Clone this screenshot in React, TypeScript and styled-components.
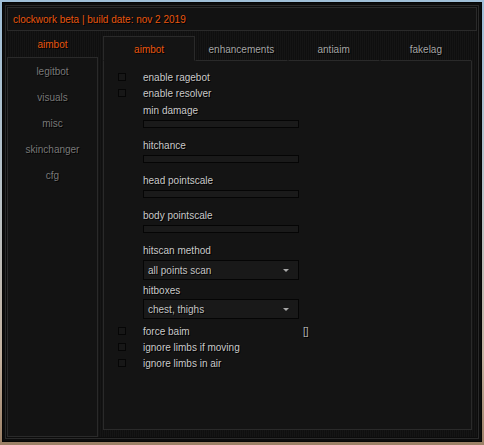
import styled, { createGlobalStyle } from "styled-components";

const GlobalStyle = createGlobalStyle`
  html, body {
    margin: 0;
    padding: 0;
    height: 100%;
    background: linear-gradient(180deg, #9fbfd8 0%, #b9c2c6 45%, #c4b2a0 80%, #9c8066 100%);
  }
  body {
    font-family: "Liberation Sans", Arial, sans-serif;
    font-size: 10px;
  }
`;

const ORANGE = "#e8560f";

const Window = styled.div`
  box-sizing: border-box;
  width: 480px;
  height: 440px;
  margin: 2px;
  padding: 2px;
  background: #0c0c0c;
  border: 1px solid #050505;
  display: flex;
`;

const Frame = styled.div`
  flex: 1;
  display: flex;
  flex-direction: column;
  border: 1px solid #2a2a2a;
  padding: 1px;
`;

const TitleBar = styled.div`
  box-sizing: border-box;
  height: 24px;
  border: 1px solid #2a2a2a;
  background: #121212;
  display: flex;
  align-items: center;
  padding: 1px 0 0 5px;
`;

const TitleText = styled.span`
  color: ${ORANGE};
  text-shadow: 1px 1px 0 #000;
`;

const Body = styled.div`
  flex: 1;
  display: flex;
  background: repeating-linear-gradient(90deg, #0f0f0f 0px, #0f0f0f 1px, #151515 1px, #151515 2px);
`;

const Sidebar = styled.div`
  width: 91px;
  display: flex;
  flex-direction: column;
`;

const SideHeader = styled.div`
  height: 26px;
  display: flex;
  align-items: center;
  justify-content: center;
  color: ${ORANGE};
  text-shadow: 1px 1px 0 #000;
`;

const SideBox = styled.div`
  flex: 1;
  border: 1px solid #2a2a2a;
  background: #131313;
`;

const SideItem = styled.div`
  box-sizing: border-box;
  height: 26px;
  padding-top: 1px;
  display: flex;
  align-items: center;
  justify-content: center;
  color: #787878;
  text-shadow: 1px 1px 0 #000;
`;

const Main = styled.div`
  flex: 1;
  display: flex;
  flex-direction: column;
  margin: 5px 5px 7px 5px;
`;

const TabRow = styled.div`
  display: flex;
`;

const Tab = styled.div<{ $active?: boolean }>`
  box-sizing: border-box;
  flex: 1;
  height: 25px;
  padding-top: 2px;
  display: flex;
  align-items: center;
  justify-content: center;
  color: ${(p) => (p.$active ? ORANGE : "#a4a4a4")};
  text-shadow: 1px 1px 0 #000;
  background: ${(p) => (p.$active ? "#141414" : "transparent")};
  border: 1px solid ${(p) => (p.$active ? "#2a2a2a" : "transparent")};
  border-bottom: 1px solid ${(p) => (p.$active ? "#141414" : "#2a2a2a")};
`;

const Panel = styled.div`
  flex: 1;
  background: #141414;
  border: 1px solid #2a2a2a;
  border-top: none;
  padding-top: 8px;
  display: flex;
  flex-direction: column;
`;

const CheckRow = styled.div`
  height: 16px;
  display: flex;
  align-items: center;
  padding-left: 14px;
`;

const CheckBox = styled.div`
  box-sizing: border-box;
  width: 8px;
  height: 8px;
  border: 1px solid #060606;
  background: #171717;
  margin-right: 17px;
`;

const Label = styled.span<{ $width?: number }>`
  box-sizing: border-box;
  height: 16px;
  padding-top: 2px;
  line-height: 14px;
  color: #c9c9c9;
  text-shadow: 1px 1px 0 #000;
  white-space: nowrap;
  ${(p) => (p.$width ? `flex: 0 0 ${p.$width}px;` : "")}
`;

const KeyBind = styled.span`
  color: #b4b4b4;
  text-shadow: 1px 1px 0 #000;
  margin: 1px 0 0 5px;
`;

const Field = styled.div<{ $gap: number }>`
  display: flex;
  flex-direction: column;
  padding-left: 39px;
  margin-bottom: ${(p) => p.$gap}px;
`;

const Slider = styled.div`
  box-sizing: border-box;
  width: 156px;
  height: 8px;
  margin-top: 2px;
  border: 1px solid #050505;
  background: #1a1a1a;
`;

const Dropdown = styled.div<{ $top: number }>`
  box-sizing: border-box;
  width: 156px;
  height: 20px;
  margin-top: ${(p) => p.$top}px;
  border: 1px solid #050505;
  background: #191919;
  display: flex;
  align-items: center;
  justify-content: space-between;
  padding: 1px 9px 0 4px;
  color: #c4c4c4;
  text-shadow: 1px 1px 0 #000;
`;

const Arrow = styled.span`
  width: 0;
  height: 0;
  border-left: 3px solid transparent;
  border-right: 3px solid transparent;
  border-top: 3px solid #a8a8a8;
`;

const Spacer = styled.div`
  height: 1px;
`;

const sideItems = ["legitbot", "visuals", "misc", "skinchanger", "cfg"];
const tabs = ["aimbot", "enhancements", "antiaim", "fakelag"];
const sliders = ["min damage", "hitchance", "head pointscale", "body pointscale"];

export default function App() {
  return (
    <>
      <GlobalStyle />
      <Window>
        <Frame>
          <TitleBar>
            <TitleText>clockwork beta | build date: nov 2 2019</TitleText>
          </TitleBar>
          <Body>
            <Sidebar>
              <SideHeader>aimbot</SideHeader>
              <SideBox>
                {sideItems.map((s) => (
                  <SideItem key={s}>{s}</SideItem>
                ))}
              </SideBox>
            </Sidebar>
            <Main>
              <TabRow>
                {tabs.map((t, i) => (
                  <Tab key={t} $active={i === 0}>
                    {t}
                  </Tab>
                ))}
              </TabRow>
              <Panel>
                <CheckRow>
                  <CheckBox />
                  <Label>enable ragebot</Label>
                </CheckRow>
                <CheckRow>
                  <CheckBox />
                  <Label>enable resolver</Label>
                </CheckRow>
                <Spacer />
                {sliders.map((s) => (
                  <Field key={s} $gap={9}>
                    <Label>{s}</Label>
                    <Slider />
                  </Field>
                ))}
                <Field $gap={2}>
                  <Label>hitscan method</Label>
                  <Dropdown $top={2}>
                    all points scan
                    <Arrow />
                  </Dropdown>
                </Field>
                <Field $gap={4}>
                  <Label>hitboxes</Label>
                  <Dropdown $top={1}>
                    chest, thighs
                    <Arrow />
                  </Dropdown>
                </Field>
                <CheckRow>
                  <CheckBox />
                  <Label $width={155}>force baim</Label>
                  <KeyBind>[]</KeyBind>
                </CheckRow>
                <CheckRow>
                  <CheckBox />
                  <Label>ignore limbs if moving</Label>
                </CheckRow>
                <CheckRow>
                  <CheckBox />
                  <Label>ignore limbs in air</Label>
                </CheckRow>
              </Panel>
            </Main>
          </Body>
        </Frame>
      </Window>
    </>
  );
}
